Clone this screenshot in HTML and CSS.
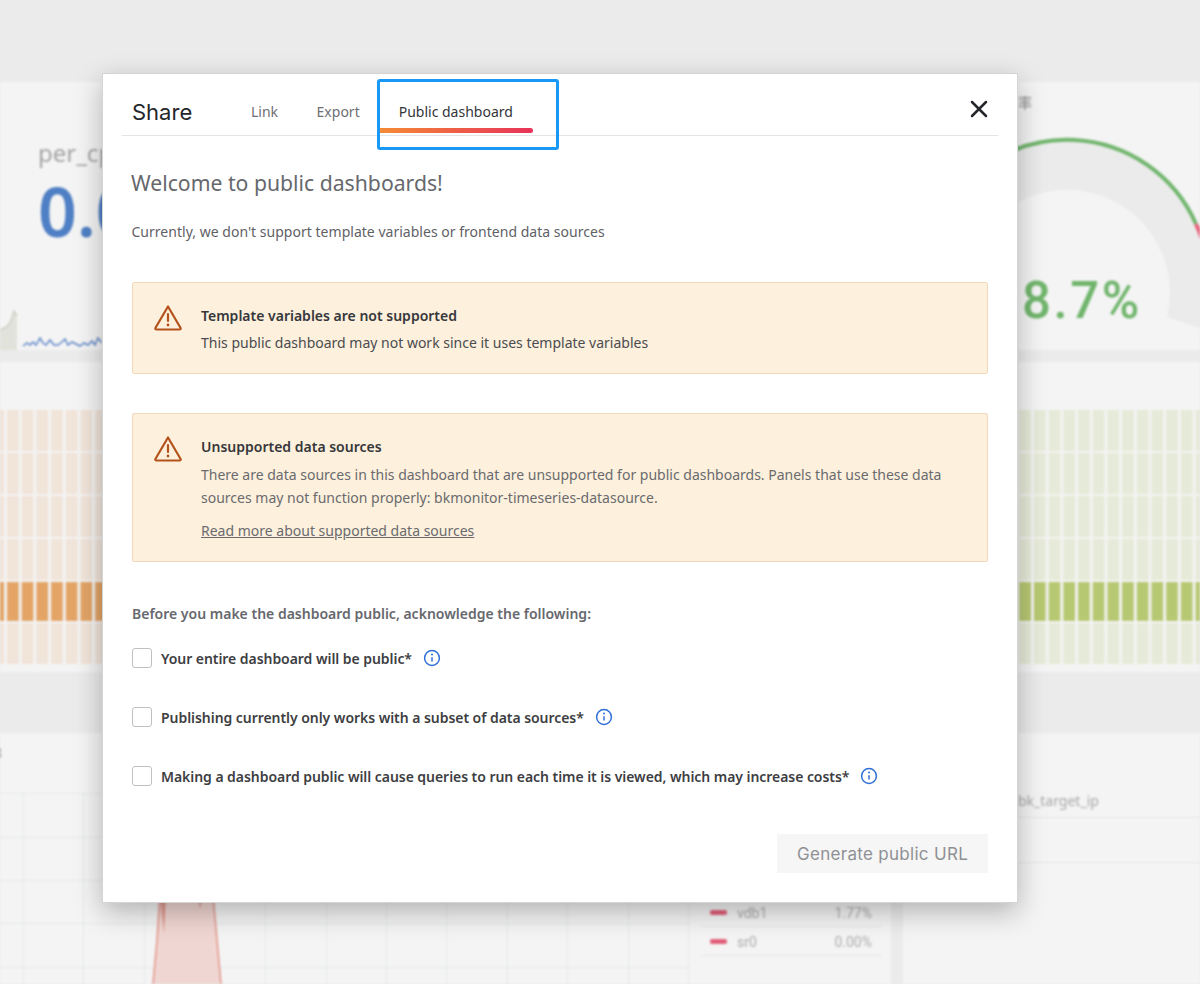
FILE: index.html
```html
<!DOCTYPE html>
<html lang="en">
<head>
    <meta charset="UTF-8">
    <title>Share dashboard</title>
    <link rel="stylesheet" href="styles.css">
</head>
<body>
    <!-- Dashboard behind the dialog, blurred -->
    <div class="dashboard">
        <div class="top-strip"></div>

        <div class="row-stats">
            <div class="stat-panel">
                <div class="stat-title">per_cpu</div>
                <div class="stat-value">0.0</div>
                <svg class="sparkline" width="102" height="46" viewBox="0 0 102 46">
                    <path d="M0 26 L6 23 L10 19 L14 7 L17 12 L17 46 L0 46 Z" fill="#e1e3db"/>
                    <path d="M0 26 L6 23 L10 19 L14 7 L17 12" fill="none" stroke="#cdd1c3" stroke-width="1.5"/>
                    <path d="M23 42 L27 39 L30 41 L33 38 L36 41 L40 34 L43 39 L46 41 L50 36 L54 41 L58 41 L62 38 L65 35 L68 41 L72 38 L76 40 L80 42 L84 39 L88 41 L92 37 L95 41 L98 34 L102 39" fill="none" stroke="#5f87c8" stroke-width="1.5"/>
                </svg>
            </div>
            <div class="gauge-panel">
                <svg class="gauge-arc" width="600" height="268" viewBox="600 82 600 268">
                    <path d="M 1167 317 L 1208 331 L 1208 281 A 141 141 0 0 0 926 281 L 964 288 A 103 103 0 1 1 1167 317 Z" fill="#ebebeb"/>
                    <path d="M 945 210 A 141 141 0 0 1 1196 224" fill="none" stroke="#70b56c" stroke-width="4"/>
                    <path d="M 1196 224 A 141 141 0 0 1 1203 242" fill="none" stroke="#e8607a" stroke-width="4"/>
                </svg>
                <div class="gauge-title">率</div>
                <div class="gauge-value">8.7%</div>
            </div>
        </div>

        <div class="row-gap"></div>

        <div class="heatmap">
            <div class="heat-row"><div class="cells orange"></div><div class="cells green"></div></div>
            <div class="heat-row"><div class="cells orange"></div><div class="cells green"></div></div>
            <div class="heat-row"><div class="cells orange"></div><div class="cells green"></div></div>
            <div class="heat-row"><div class="cells orange"></div><div class="cells green"></div></div>
            <div class="heat-row strong"><div class="cells orange"></div><div class="cells green"></div></div>
            <div class="heat-row"><div class="cells orange"></div><div class="cells green"></div></div>
        </div>

        <div class="row-section"></div>

        <div class="row-charts">
            <div class="chart-panel">
                <div class="chart-mark">8</div>
                <svg class="chart-lines" width="690" height="251" viewBox="0 733 690 251">
                    <g stroke="#e6e7ea" stroke-width="1">
                        <path d="M23.5 793V984M83.5 793V984M144.5 793V984M205.5 793V984M265.5 793V984M326.5 793V984M386.5 793V984M446.5 793V984M507.5 793V984M567.5 793V984M628.5 793V984M688.5 793V984"/>
                        <path d="M0 793.5H690M0 837.5H690M0 880.5H690M0 923.5H690M0 967.5H690"/>
                    </g>
                    <path d="M153 984 L157 940 L160 895 L213 895 L217 940 L221 984 Z" fill="#f0d6d2"/>
                    <path d="M153 984 L157 940 L160 895 M213 895 L217 940 L221 984" fill="none" stroke="#e08e80" stroke-width="1.4"/>
                    <path d="M160 895 L162 915 L164 934 L166 895 Z M198 895 L200 909 L203 895 Z" fill="#e09a8c"/>
                </svg>
                <div class="legend">
                    <div class="legend-row"><span class="swatch"></span><span class="legend-name">vdb1</span><span class="legend-val">1.77%</span></div>
                    <div class="legend-row"><span class="swatch"></span><span class="legend-name">sr0</span><span class="legend-val">0.00%</span></div>
                </div>
            </div>
            <div class="chart-gap"></div>
            <div class="table-panel">
                <div class="table-head"><span>bk_target_ip</span></div>
                <div class="table-row"></div>
            </div>
        </div>
    </div>

    <!-- Share dialog -->
    <div class="modal">
        <div class="modal-header">
            <div class="modal-title">Share</div>
            <div class="tabs">
                <div class="tab">Link</div>
                <div class="tab">Export</div>
                <div class="tab active">Public dashboard</div>
            </div>
            <svg class="close-icon" width="18" height="18" viewBox="0 0 18 18">
                <path d="M2 2 L16 16 M16 2 L2 16" stroke="#24262b" stroke-width="2.5" stroke-linecap="round"/>
            </svg>
        </div>

        <div class="modal-body">
            <h2 class="welcome">Welcome to public dashboards!</h2>
            <p class="intro">Currently, we don't support template variables or frontend data sources</p>

            <div class="alert alert-first">
                <svg class="alert-icon" width="28" height="28" viewBox="0 0 28 28">
                    <path d="M14 2.5 L26.6 24 Q27 25.5 25.4 25.5 L2.6 25.5 Q1 25.5 1.4 24 Z" fill="none" stroke="#b4521c" stroke-width="2.2" stroke-linejoin="round"/>
                    <path d="M14 10 V17" stroke="#b4521c" stroke-width="2.2" stroke-linecap="round"/>
                    <circle cx="14" cy="21" r="1.4" fill="#b4521c"/>
                </svg>
                <div class="alert-content">
                    <div class="alert-title">Template variables are not supported</div>
                    <div class="alert-text">This public dashboard may not work since it uses template variables</div>
                </div>
            </div>

            <div class="alert alert-second">
                <svg class="alert-icon" width="28" height="28" viewBox="0 0 28 28">
                    <path d="M14 2.5 L26.6 24 Q27 25.5 25.4 25.5 L2.6 25.5 Q1 25.5 1.4 24 Z" fill="none" stroke="#b4521c" stroke-width="2.2" stroke-linejoin="round"/>
                    <path d="M14 10 V17" stroke="#b4521c" stroke-width="2.2" stroke-linecap="round"/>
                    <circle cx="14" cy="21" r="1.4" fill="#b4521c"/>
                </svg>
                <div class="alert-content">
                    <div class="alert-title">Unsupported data sources</div>
                    <div class="alert-text muted">There are data sources in this dashboard that are unsupported for public dashboards. Panels that use these data sources may not function properly: bkmonitor-timeseries-datasource.</div>
                    <a class="alert-link">Read more about supported data sources</a>
                </div>
            </div>

            <div class="ack-title">Before you make the dashboard public, acknowledge the following:</div>

            <div class="ack-row">
                <span class="checkbox"></span>
                <span class="ack-label">Your entire dashboard will be public*</span>
                <svg class="info-icon" width="18" height="18" viewBox="0 0 18 18">
                    <circle cx="9" cy="9" r="7.4" fill="none" stroke="#2f6fd6" stroke-width="1.5"/>
                    <circle cx="9" cy="5.6" r="1" fill="#2f6fd6"/>
                    <path d="M9 8.2V12.6" stroke="#2f6fd6" stroke-width="1.5"/>
                </svg>
            </div>
            <div class="ack-row">
                <span class="checkbox"></span>
                <span class="ack-label">Publishing currently only works with a subset of data sources*</span>
                <svg class="info-icon" width="18" height="18" viewBox="0 0 18 18">
                    <circle cx="9" cy="9" r="7.4" fill="none" stroke="#2f6fd6" stroke-width="1.5"/>
                    <circle cx="9" cy="5.6" r="1" fill="#2f6fd6"/>
                    <path d="M9 8.2V12.6" stroke="#2f6fd6" stroke-width="1.5"/>
                </svg>
            </div>
            <div class="ack-row">
                <span class="checkbox"></span>
                <span class="ack-label">Making a dashboard public will cause queries to run each time it is viewed, which may increase costs*</span>
                <svg class="info-icon" width="18" height="18" viewBox="0 0 18 18">
                    <circle cx="9" cy="9" r="7.4" fill="none" stroke="#2f6fd6" stroke-width="1.5"/>
                    <circle cx="9" cy="5.6" r="1" fill="#2f6fd6"/>
                    <path d="M9 8.2V12.6" stroke="#2f6fd6" stroke-width="1.5"/>
                </svg>
            </div>

            <div class="modal-footer">
                <button class="generate-btn" disabled>Generate public URL</button>
            </div>
        </div>
    </div>

    <!-- Blue annotation box around the tab -->
    <div class="tab-highlight"></div>
</body>
</html>
```

FILE: styles.css
```css
/* Page */
body {
    margin: 0;
    width: 1200px;
    height: 984px;
    overflow: hidden;
    background-color: #ebebeb;
    font-family: "Noto Sans", sans-serif;
    position: relative;
}

/* Blurred dashboard behind the dialog */
.dashboard {
    display: flex;
    flex-direction: column;
    height: 984px;
    filter: blur(1px);
    color: #9a9a9a;
}

.top-strip {
    height: 82px;
    background-color: #ebebeb;
}

.row-stats {
    height: 268px;
    display: flex;
    background-color: #f4f4f4;
}

.stat-panel {
    width: 600px;
    padding: 54px 0 0 38px;
    box-sizing: border-box;
    position: relative;
}

.stat-title {
    font-size: 24px;
    line-height: 34px;
    color: #a4a4a4;
}

.stat-value {
    margin-top: 4px;
    font-size: 68px;
    line-height: 74px;
    color: #4f7fc4;
    font-weight: 600;
}

.sparkline {
    position: absolute;
    left: 0;
    bottom: 0;
}

.gauge-panel {
    width: 600px;
    padding: 10px 0 0 418px;
    box-sizing: border-box;
    position: relative;
}

.gauge-arc {
    position: absolute;
    left: 0;
    top: 0;
}

.gauge-title {
    position: relative;
    font-family: "Noto Sans CJK SC", sans-serif;
    font-size: 14px;
    line-height: 20px;
    color: #8c8c8c;
}

.gauge-value {
    position: relative;
    margin: 160px 0 0 4px;
    font-family: "Roboto", sans-serif;
    font-size: 51px;
    font-weight: 500;
    line-height: 58px;
    letter-spacing: 2.5px;
    color: #70b56c;
}

.row-gap {
    height: 12px;
    background-color: #ebebeb;
}

/* Heatmap */
.heatmap {
    height: 310px;
    box-sizing: border-box;
    padding-top: 48px;
    background-color: #f4f4f4;
    display: flex;
    flex-direction: column;
    gap: 2px;
    filter: blur(0.6px);
}

.heat-row {
    height: 41px;
    display: flex;
}

.heat-row.strong {
    height: 39px;
}

.cells {
    width: 600px;
    background-size: 14.7px 100%;
    background-repeat: repeat-x;
}

.cells.orange {
    background-image: linear-gradient(90deg, #f1e4d9 0 11.5px, transparent 11.5px);
    background-position: 7px 0;
}

.cells.green {
    background-image: linear-gradient(90deg, #e6ead8 0 11.5px, transparent 11.5px);
    background-position: 8px 0;
}

.strong .cells.orange {
    background-image: linear-gradient(90deg, #e3a466 0 11.5px, transparent 11.5px);
}

.strong .cells.green {
    background-image: linear-gradient(90deg, #b7c872 0 11.5px, transparent 11.5px);
}

.row-section {
    height: 61px;
    background-color: #ebebeb;
}

/* Bottom charts */
.row-charts {
    height: 251px;
    display: flex;
    background-color: #f4f4f4;
}

.chart-panel {
    width: 891px;
    position: relative;
}

.chart-mark {
    position: absolute;
    left: -6px;
    top: 10px;
    font-size: 14px;
    color: #999;
}

.chart-lines {
    position: absolute;
    left: 0;
    top: 0;
}

.legend {
    position: absolute;
    left: 700px;
    top: 166px;
    width: 182px;
}

.legend-row {
    height: 28px;
    margin-bottom: 1px;
    display: flex;
    align-items: center;
    padding: 0 10px;
    box-sizing: border-box;
    border-bottom: 1px solid #e6e6e6;
    font-family: "Roboto", sans-serif;
    font-size: 14px;
    color: #adadad;
}

.swatch {
    width: 17px;
    height: 5px;
    border-radius: 2px;
    background-color: #e2607a;
    margin-right: 10px;
}

.legend-val {
    margin-left: auto;
}

.chart-gap {
    width: 12px;
    background-color: #ebebeb;
}

.table-panel {
    flex: 1;
    padding-top: 58px;
    font-size: 14px;
    color: #a8a8a8;
}

.table-head {
    height: 26px;
    padding-left: 115px;
    border-bottom: 1px solid #e6e6e6;
}

.table-row {
    height: 44px;
    border-bottom: 1px solid #e6e6e6;
}

/* Dialog */
.modal {
    position: absolute;
    left: 102px;
    top: 73px;
    width: 916px;
    height: 830px;
    box-sizing: border-box;
    background-color: #fff;
    border: 1px solid #d4d4d4;
    box-shadow: 0 9px 26px rgba(0, 0, 0, 0.27);
}

.modal-header {
    display: flex;
    align-items: stretch;
    margin: 0 19px;
    padding-left: 10px;
    height: 61px;
    border-bottom: 1px solid #e4e4e4;
    position: relative;
}

.modal-title {
    font-family: "Inter", sans-serif;
    font-size: 22px;
    line-height: 76px;
    color: #24262b;
    width: 100px;
}

.tabs {
    display: flex;
}

.tab {
    padding: 0 19.5px;
    font-size: 14px;
    line-height: 76px;
    color: #6e7075;
    position: relative;
}

.tab:first-child {
    padding-left: 19px;
    padding-right: 19px;
}

.tab.active {
    color: #33353a;
}

/* Gradient underline of the open tab */
.tab.active::after {
    content: "";
    position: absolute;
    left: 0;
    right: -1px;
    bottom: 2px;
    height: 5px;
    border-radius: 0 3px 3px 0;
    background-image: linear-gradient(90deg, #f58b35, #e8325a);
}

.close-icon {
    margin: 26px 10px 0 auto;
}

.modal-body {
    padding: 0 29px;
}

.welcome {
    margin: 29px 0 0 -1px;
    font-size: 21.2px;
    line-height: 36px;
    font-weight: 400;
    color: #66686d;
}

.intro {
    margin: 20px 0 0 -0.5px;
    font-size: 14px;
    line-height: 22px;
    letter-spacing: 0.02px;
    color: #5f6166;
}

/* Warning boxes */
.alert {
    display: flex;
    box-sizing: border-box;
    background-color: #fdf0dc;
    border: 1px solid #f2d9bb;
    border-radius: 2px;
    padding: 21px 0 0 21px;
}

.alert-first {
    height: 92px;
    margin-top: 39px;
}

.alert-second {
    height: 149px;
    margin-top: 39px;
}

.alert-icon {
    flex: none;
}

.alert-content {
    margin-left: 19px;
    padding: 1px 36px 0 0;
    font-size: 14px;
    line-height: 23px;
    color: #4b4c50;
}

.alert-title {
    font-weight: 600;
    color: #36373b;
    line-height: 22px;
    margin-bottom: 5px;
}

.alert-first .alert-title {
    margin-bottom: 4px;
}

.alert-text.muted {
    color: #6a6b6e;
}

.alert-link {
    display: block;
    margin-top: 10px;
    color: #6a6b6e;
    text-decoration: underline;
}

/* Acknowledgements */
.ack-title {
    margin-top: 41px;
    font-size: 14px;
    line-height: 22px;
    font-weight: 600;
    color: #66686d;
}

.ack-row {
    display: flex;
    align-items: center;
    height: 20px;
    margin-bottom: 39px;
}

.ack-title + .ack-row {
    margin-top: 23px;
}

.checkbox {
    width: 20px;
    height: 20px;
    box-sizing: border-box;
    border: 1px solid #c0c0c0;
    border-radius: 3px;
    background-color: #fff;
}

.ack-label {
    margin-left: 9px;
    font-size: 14px;
    font-weight: 600;
    letter-spacing: -0.05px;
    color: #3d3e42;
}

.info-icon {
    margin-left: 11px;
}

.modal-footer {
    display: flex;
    justify-content: flex-end;
    margin-top: 48px;
}

.generate-btn {
    width: 211px;
    height: 39px;
    border: none;
    background-color: #f6f6f6;
    font-family: "Inter", sans-serif;
    font-size: 17px;
    letter-spacing: 0.3px;
    color: #8e9094;
}

/* Annotation */
.tab-highlight {
    position: absolute;
    left: 377px;
    top: 79px;
    width: 182px;
    height: 71px;
    box-sizing: border-box;
    border: 3px solid #1a98f5;
    border-radius: 3px;
}
```
